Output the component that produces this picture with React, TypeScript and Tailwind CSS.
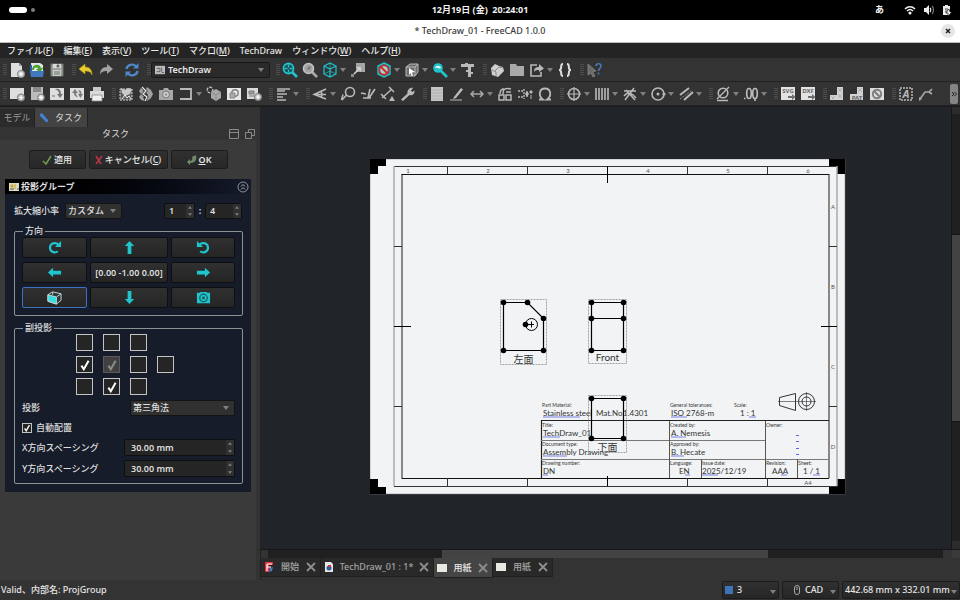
import { useState } from "react";
import type { ReactNode } from "react";
import clsx from "clsx";

const G = "#b9b9b9";
const W = "#dedede";
const T = "#1fc4cd";

// Toolbar drawings, all on a 16x16 grid
const icons: Record<string, ReactNode> = {
  newDoc: (
    <>
      <path d="M2 1h8l3 3v11H2z" fill={W} />
      <path d="M10 1v3h3z" fill="#999" />
      <circle cx="12" cy="12" r="3.6" fill="#c9c9c9" stroke="#8b8b8b" />
      <path d="M12 10v4M10 12h4" stroke="#fff" strokeWidth="1.2" />
    </>
  ),
  open: (
    <>
      <path d="M2 1h9l3 2v9H2z" fill="#e4e8ec" />
      <path d="M1 3h2v6H1z" fill="#2e5f9e" />
      <path d="M3 8c0-6 8-7 9-2l2.500-.5L11 10.500 7 7.500l2-.5C8 5 5 5 5 8z" fill="#4da32f" />
      <path d="M1 9h14l-1 6H2z" fill="#3f78bd" />
    </>
  ),
  save: (
    <>
      <path d="M2 2h12v12H2z" fill="#9aa29a" stroke="#777" />
      <path d="M4 2h8v4H4z" fill="#d8dcd8" />
      <path d="M4 8h8v6H4z" fill="#c6cbc6" />
      <path d="M8 3h2v2H8zM5 10h6M5 12h6" stroke="#6c736c" fill="#555" />
    </>
  ),
  undo: <path d="M1 7l6-5v3c5 0 7 3 7 8-1-3-3-4-7-4v3z" fill="#e8cb2e" stroke="#b59a14" strokeWidth=".6" />,
  redo: <path d="M15 7L9 2v3c-5 0-7 3-7 8 1-3 3-4 7-4v3z" fill="#a3a3a3" />,
  refresh: (
    <g fill="none" stroke="#4f86c8" strokeWidth="2.4">
      <path d="M2.500 7C3 3 9 1 12 4.500" />
      <path d="M13.500 9C13 13 7 15 4 11.500" />
      <path d="M14.500 1v5.500H9zM1.500 15V9.500H7z" fill="#4f86c8" stroke="none" />
    </g>
  ),
  fitAll: (
    <>
      <path d="M10 10l5 5" stroke={T} strokeWidth="2.6" />
      <circle cx="6.500" cy="6.500" r="5" fill="#174b50" stroke={T} strokeWidth="1.8" />
      <path d="M6.500 2.500v8M2.500 6.500h8" stroke={T} strokeWidth="1.4" />
      <path d="M5.500 5.500h2v2h-2z" fill="#333" />
    </>
  ),
  fitSel: (
    <>
      <path d="M10 10l5 5" stroke="#a8a8a8" strokeWidth="2.6" />
      <circle cx="6.500" cy="6.500" r="5" fill="#a2a2a2" stroke="#c2c2c2" strokeWidth="1.6" />
      <path d="M5 8l1-3 3-1-1 3z" fill="#777" />
    </>
  ),
  cube: (
    <g fill="none" stroke={T} strokeWidth="1.2">
      <path d="M8 1l6 3v8l-6 3-6-3V4zM2 4l6 3 6-3M8 7v8" />
      <path d="M8 1v6M2 12l6-3 6 3" strokeWidth=".7" />
    </g>
  ),
  link: (
    <>
      <path d="M6 1h9v9H6z" fill="#a5a5a5" />
      <path d="M6 5h5v5z" fill="#d0d0d0" />
      <path d="M9 7l-5 5" stroke="#d0d0d0" strokeWidth="1.6" />
      <path d="M1 12h3v3H1z" fill="#8c8c8c" />
    </>
  ),
  noClip: (
    <>
      <path d="M8 1l6 3v8l-6 3-6-3V4z" fill="#1b6a70" stroke={T} strokeWidth="1.4" />
      <circle cx="8" cy="8" r="4.600" fill="#a9cfd1" stroke="#d02a2a" strokeWidth="1.800" />
      <path d="M5 5l6 6" stroke="#d02a2a" strokeWidth="1.800" />
    </>
  ),
  cubeCursor: (
    <>
      <path d="M2 5l4-3h8v8l-3 4H2zM2 5h9v9M11 5l3-3" fill="#6d6d6d" stroke={G} />
      <path d="M5 6l6 4-3 .5 1 3-1.500.5-1-3L5 13z" fill="#fff" />
    </>
  ),
  zoomTeal: (
    <>
      <path d="M9 9l6 6" stroke={T} strokeWidth="2.600" />
      <circle cx="6" cy="6" r="4.800" fill={T} />
      <path d="M3 6c1-3 5-3 6 0l-2 .5c-1-1-2-1-4-.5z" fill="#f2fbfb" />
    </>
  ),
  caliper: <path d="M1 2h4V1h3v1h6v3h-3v5h2v2h-2v3H8v-5H6V8h2V5H1z" fill={G} />,
  part: (
    <>
      <path d="M2 6l4-4 4 2 4 1 1 4-6 6-6-2z" fill="#cfcfcf" />
      <path d="M6 9l4-4 4 1M3 8l4 2v4" stroke="#888" fill="none" />
    </>
  ),
  folder: <path d="M1 2h6l1 2h7v10H1z" fill="#a9a9a9" />,
  share: (
    <>
      <path d="M8 3H2v11h10v-4" fill="none" stroke={G} strokeWidth="1.600" />
      <path d="M5 10c0-4 2-5 5-5V2l5 4.500L10 10V8C8 8 6 8 5 10z" fill={G} />
    </>
  ),
  braces: (
    <path
      d="M6 2C3.500 2 4.500 4 4 6.500 3.800 7.500 3 8 2 8c1 0 1.800.5 2 1.500C4.500 12 3.500 14 6 14M10 2c2.500 0 1.500 2 2 4.500.2 1 1 1.500 2 1.500-1 0-1.800.5-2 1.500-.5 2.500.5 4.500-2 4.500"
      fill="none"
      stroke={W}
      strokeWidth="2"
    />
  ),
  whats: (
    <>
      <path d="M2 2l8 7-3.500.5L9 14l-2 1-2-4-3 2z" fill="#6a6a6a" stroke="#8c8c8c" strokeWidth=".7" />
      <path d="M10 4c0-3 5-3 5 0 0 2-2.500 2.500-2.500 5M12.500 10.500v2" fill="none" stroke="#4a78bd" strokeWidth="1.600" />
    </>
  ),
  page: (
    <>
      <path d="M1 2h14v11H1z" fill={W} />
      <circle cx="12" cy="11.500" r="3.600" fill="#bdbdbd" stroke="#7a7a7a" />
      <path d="M12 9.500v4M10 11.500h4" stroke="#fff" strokeWidth="1.200" />
    </>
  ),
  pageTpl: (
    <>
      <path d="M2 1h12v13H2z" fill="#bcbcbc" />
      <path d="M4 1h8v5H4z" fill="#8a8a8a" />
      <circle cx="12" cy="11.500" r="3.400" fill="#cfcfcf" stroke="#777" />
      <path d="M12 9.500v4M10 11.500h4" stroke="#fff" strokeWidth="1.200" />
    </>
  ),
  pageRedraw: (
    <>
      <path d="M1 2h14v12H1z" fill={W} />
      <path d="M6 3c5-1 6 2 6 5h2l-3 4-3-4h2c0-2-1-4-4-5z" fill="#777" />
      <path d="M3 9h3v2H3z" fill="#aaa" />
    </>
  ),
  pageAll: (
    <>
      <path d="M1 2h14v12H1z" fill={W} />
      <path d="M3 7l3-4 3 4H7c0 2 1 3 2 4-3 0-4-2-4-4zM14 8l-2.500 4L9 8h1.500c0-2 0-3-1.500-4 3 0 3.500 2 3.500 4z" fill="#7c7c7c" />
    </>
  ),
  printer: (
    <>
      <path d="M4 1h8v5H4z" fill="#c9c9c9" />
      <path d="M1 5h14v7H1z" fill="#dadada" />
      <path d="M3 9h10v6H3z" fill="#efefef" stroke="#8a8a8a" strokeWidth=".8" />
    </>
  ),
  view: (
    <>
      <path d="M2 3h12v11H2z" fill="#5c5c5c" stroke="#d5d5d5" strokeDasharray="2 1" />
      <path d="M3 2l4 2 3-2 4 1-2 5-5 2-3-3z" fill="#c9c9c9" />
      <path d="M4 13l3-4 2 3 2-2 2 3" stroke="#eee" fill="none" />
    </>
  ),
  broken: (
    <>
      <path d="M3 2h4L5 5l3 3-3 3 2 4-4-1-2-3 2-3-2-3z" fill="#a0a0a0" />
      <path d="M9 1l4 3 2 4-2 4-4 3-2-2 3-4-3-4z" fill="#a0a0a0" />
      <path d="M4 1l4 4-3 3 4 3-2 4" fill="none" stroke="#333" strokeWidth="2.600" />
      <path d="M4 1l4 4-3 3 4 3-2 4" fill="none" stroke="#e9e9e9" strokeWidth="1.200" />
    </>
  ),
  camera: (
    <>
      <path d="M1 4h4l1-2h4l1 2h4v10H1z" fill="#a8a8a8" />
      <circle cx="8" cy="8.500" r="3.400" fill="#d0d0d0" stroke="#777" />
      <circle cx="8" cy="8.500" r="1.300" fill="#999" />
    </>
  ),
  section: <path d="M2 3h11v10H2" fill="none" stroke={G} strokeWidth="1.800" />,
  detail: (
    <>
      <circle cx="4" cy="4" r="2.800" fill="none" stroke="#c4c4c4" strokeWidth="1.300" strokeDasharray="3 1" />
      <path d="M5 6l5-3 5 3v6l-5 3-5-3z" fill="#a8a8a8" />
      <path d="M5 6l5 3 5-3M10 9v6" stroke="#8c8c8c" fill="none" />
    </>
  ),
  clip: (
    <>
      <path d="M1 2h14v12H1z" fill="#e8e8e8" />
      <circle cx="9" cy="7" r="3.200" fill="none" stroke="#808080" strokeWidth="1.400" />
      <path d="M4 7h5v5H4z" fill="#aaa" stroke="#888" />
    </>
  ),
  clipAdd: (
    <>
      <path d="M1 2h11v11H1z" fill="#d9d9d9" />
      <path d="M3 5h5v3H3zM3 10h6" stroke="#7d7d7d" fill="#999" />
      <circle cx="12" cy="11" r="3.600" fill="#bdbdbd" stroke="#7a7a7a" />
      <path d="M12 9v4M10 11h4" stroke="#fff" strokeWidth="1.200" />
    </>
  ),
  stack: <path d="M2 3h13M2 5h8M2 8h10M2 11h6M2 14h9" stroke={G} strokeWidth="1.600" />,
  angle: <path d="M14 3L2 8.500 14 13M2 8.500h12M9 5c1 2 1 5 0 7" fill="none" stroke={G} strokeWidth="1.500" />,
  leader: (
    <>
      <circle cx="10" cy="6" r="4.500" fill="none" stroke={G} strokeWidth="1.600" />
      <path d="M6.500 9L2 14M3 8.500L1.500 14" stroke={G} strokeWidth="1.500" fill="none" />
    </>
  ),
  hatchDim: <path d="M1 7l5 1M3 12h5l2-9M9 12L15 3M8 12h3" fill="none" stroke={G} strokeWidth="1.700" />,
  dimTri: (
    <>
      <path d="M2 12L12 3M9 1l5 5M1 8l5 5" stroke={G} strokeWidth="1.500" fill="none" />
      <path d="M9 15l3-5 3 5z" fill={G} />
    </>
  ),
  wrench: (
    <path d="M1 13.500L7.500 7.500C7 4 10 1 13 2l-2 2.500L12 6l2.500-1.500C15 8 12 10 9.500 9L3 15z" fill={G} />
  ),
  hatch: (
    <>
      <path d="M2 1h12v14H2z" fill="#c6c6c6" />
      <path d="M2 4h12M2 7h12M2 10h12M2 13h12" stroke="#b0b0b0" />
    </>
  ),
  pen: (
    <>
      <path d="M5 11l7-9 2 1.500-7 8.500-3 1z" fill="#bdbdbd" />
      <path d="M1 14h12" stroke="#9a9a9a" strokeWidth="1.300" />
    </>
  ),
  extent: <path d="M2 8h12M5 5L2 8l3 3M11 5l3 3-3 3" fill="none" stroke="#a8a8a8" strokeWidth="1.500" />,
  weld: (
    <>
      <path d="M2 9h5v5H2zM9 9h5v5H9zM6 8c0-6 3-6 8-5M3 8c0-3 1-5 4-5" fill="none" stroke={G} strokeWidth="1.500" />
      <path d="M9 6h5" stroke={G} strokeWidth="1.500" />
    </>
  ),
  surface: (
    <>
      <path d="M1 5h5M1 11h5M7 3v10M9 6h2v4H9z" stroke={G} strokeWidth="1.400" fill={G} strokeDasharray="2 1" />
      <path d="M13 5h2v2h-2zM14 9v4" fill={G} stroke={G} />
    </>
  ),
  omega: <path d="M2 13.500h4C1 10 2 2.500 8 2.500s7 7.500 2 11h4" fill="none" stroke={G} strokeWidth="1.800" />,
  target: (
    <g fill="none" stroke={G} strokeWidth="1.600">
      <circle cx="8" cy="8" r="5.500" />
      <path d="M8 1v14M1 8h14" strokeWidth="1.200" />
    </g>
  ),
  bars: <path d="M2 2v12M5 2v12M8 2v12M11 2v12M14 2v12" stroke={G} strokeWidth="1.600" />,
  cross: <path d="M3 14L12 2M2 5h12M4 4l9 10M2 10c4-5 8-3 12 2" fill="none" stroke={G} strokeWidth="1.500" />,
  dotCircle: (
    <>
      <circle cx="8" cy="8" r="6" fill="none" stroke={G} strokeWidth="1.600" />
      <circle cx="8" cy="8" r="1.500" fill={G} />
      <circle cx="14" cy="8" r="1.600" fill={G} />
    </>
  ),
  parallel: (
    <>
      <path d="M2 9l9-7M6 14l9-8" stroke={G} strokeWidth="2" />
      <path d="M2 13l12-9" stroke="#888" strokeDasharray="2 1" />
    </>
  ),
  diameter: (
    <>
      <circle cx="8" cy="7" r="4.800" fill="none" stroke={G} strokeWidth="1.600" />
      <path d="M2 13L14 1M2 14.500h11" stroke={G} strokeWidth="1.400" />
    </>
  ),
  zeros: (
    <g fill="none" stroke={G} strokeWidth="1.700">
      <ellipse cx="6" cy="7.500" rx="2.300" ry="5" />
      <ellipse cx="12" cy="7.500" rx="2.300" ry="5" />
      <path d="M1 12.500h1.500M12 13v2" />
    </g>
  ),
  svg: (
    <>
      <path d="M1 1h14v13H1z" fill="#e2e2e2" />
      <path d="M8 10h4V8l3.500 3L12 14v-2H8z" fill="#6d6d6d" />
      <text x="8" y="7" fontSize="6" fontWeight="700" textAnchor="middle" fill="#666">SVG</text>
    </>
  ),
  dxf: (
    <>
      <path d="M1 1h14v13H1z" fill="#e2e2e2" />
      <path d="M8 10h4V8l3.500 3L12 14v-2H8z" fill="#6d6d6d" />
      <text x="8" y="7" fontSize="6" fontWeight="700" textAnchor="middle" fill="#666">DXF</text>
    </>
  ),
  fill: (
    <>
      <path d="M8 1h6v13H1V9h7z" fill="#d2d2d2" />
      <path d="M2 10l3 3M6 10l-3 3M9 2l4 4M13 2L9 6M9 8l4 4M13 8l-4 4" stroke="#b0b0b0" />
    </>
  ),
  fillPat: (
    <>
      <path d="M8 1h6v13H1V8h7z" fill="#d2d2d2" />
      <path d="M9 2l4 4M13 2L9 6" stroke="#b0b0b0" />
      <text x="8" y="14" fontSize="6" fontWeight="700" textAnchor="middle" fill="#666">PAT</text>
    </>
  ),
  off: (
    <>
      <path d="M1 2h14v12H1z" fill="#dcdcdc" />
      <circle cx="8" cy="8" r="4.200" fill="none" stroke="#7d7d7d" strokeWidth="1.900" />
      <path d="M5 5l6 6" stroke="#7d7d7d" strokeWidth="1.900" />
    </>
  ),
  richText: (
    <>
      <path d="M2 2h12v12H2z" fill="none" stroke={G} strokeWidth="1.500" strokeDasharray="2 1" />
      <text x="8" y="12" fontSize="11" fontWeight="700" fontStyle="italic" textAnchor="middle" fill={G}>A</text>
    </>
  ),
  annoLine: (
    <>
      <path d="M2 13l5-7h5M11 6l3-3M11 6l3 2" fill="none" stroke="#a8a8a8" strokeWidth="1.600" />
      <path d="M1 15v-4l3 2z" fill="#a8a8a8" />
    </>
  ),
};

// "name>" has a drop-down arrow, "-" is a separator
const viewTools = [
  ["newDoc", "open", "save"],
  ["undo", "redo", "-", "refresh"],
  ["#workbench"],
  ["fitAll", "fitSel", "cube>", "link", "-", "noClip>", "cubeCursor>", "zoomTeal>", "caliper"],
  ["part", "folder", "share>", "braces"],
  ["whats"],
];

const drawTools = [
  ["page", "pageTpl", "pageRedraw", "pageAll", "printer"],
  ["view", "broken", "camera", "section>", "detail", "clip", "clipAdd"],
  ["stack>"],
  ["angle>", "leader", "hatchDim", "dimTri", "wrench"],
  ["hatch", "pen", "extent>", "weld", "surface", "omega"],
  ["target>", "bars>", "cross>", "dotCircle>", "parallel>"],
  ["diameter>", "zeros>"],
  ["svg", "dxf"],
  ["fill", "fillPat", "off"],
  ["richText", "annoLine"],
];

const Caret = ({ className = "" }: { className?: string }) => (
  <svg viewBox="0 0 6 4" className={clsx("h-1 w-1.5 shrink-0", className)} aria-hidden="true">
    <path d="M0 0h6L3 4z" fill="#808080" />
  </svg>
);

const Grip = () => (
  <svg viewBox="0 0 4 11" className="h-[11px] w-1 shrink-0" aria-hidden="true">
    <path d="M1 0v11M3 0v11" stroke="#686868" strokeDasharray="1 1" />
  </svg>
);

const WorkbenchSelect = () => (
  <span className="relative mr-px flex h-4 items-center">
    <select
      aria-label="Workbench"
      className="h-4 w-[119px] appearance-none rounded-xs border border-[#191919] bg-[#2a2a2a] pl-4 text-[9px] leading-3.5 font-semibold text-[#e6e6e6]"
    >
      <option>TechDraw</option>
    </select>
    <svg viewBox="0 0 12 10" className="pointer-events-none absolute left-1 h-2.5 w-2.5" aria-hidden="true">
      <path d="M0 0h12v10H0z" fill="#bcbcbc" />
      <path d="M2 3h4v4H2M8 2v5M8 8h3" stroke="#555" fill="none" />
    </svg>
    <Caret className="pointer-events-none absolute right-1.5" />
  </span>
);

const ToolButton = ({ id }: { id: string }) => {
  const hasMenu = id.endsWith(">");
  const name = hasMenu ? id.slice(0, -1) : id;
  return (
    <button type="button" aria-label={name} className="flex items-center px-0.5">
      <svg viewBox="0 0 16 16" className="size-4" aria-hidden="true">
        {icons[name]}
      </svg>
      {hasMenu && <Caret className="ml-0.5" />}
    </button>
  );
};

const Toolbar = ({ groups, children }: { groups: string[][]; children?: ReactNode }) => (
  <div className="flex h-6 items-center border-b border-[#222] bg-[#333]">
    {groups.map((group, gi) => (
      <div key={gi} className="flex items-center pl-[5px] first:pl-[3px]">
        <Grip />
        {group.map((id) => {
          if (id === "-") return <span key={id} className="w-1.5" />;
          if (id === "#workbench") return <WorkbenchSelect key={id} />;
          return <ToolButton key={id} id={id} />;
        })}
      </div>
    ))}
    {children}
  </div>
);

const menus = [
  ["ファイル", "F"],
  ["編集", "E"],
  ["表示", "V"],
  ["ツール", "T"],
  ["マクロ", "M"],
  ["TechDraw", ""],
  ["ウィンドウ", "W"],
  ["ヘルプ", "H"],
];

const MenuBar = () => (
  <nav className="flex h-[15px] items-center gap-2.5 bg-[#242424] pl-[7px] text-[9px] leading-3 font-medium text-[#e6e6e6]">
    {menus.map(([label, key]) => (
      <button key={label} type="button" className="whitespace-nowrap">
        {label}
        {key && (
          <>
            (<u className="underline-offset-1">{key}</u>)
          </>
        )}
      </button>
    ))}
  </nav>
);

const TopBar = () => (
  <header className="relative flex h-5 items-center justify-center bg-black text-[9px] font-bold text-[#f2f2f2]">
    <div className="absolute left-[9px] flex items-center gap-1">
      <span className="h-1.5 w-[18px] rounded-full bg-white" />
      <span className="size-1 rounded-full bg-[#7c7c7c]" />
    </div>
    <span className="whitespace-pre">12月19日 (金)  20:24:01</span>
    <div className="absolute right-2 flex items-center">
      <span className="mr-5">あ</span>
      <svg viewBox="0 0 12 10" className="mr-[7px] h-2.5 w-3" aria-hidden="true">
        <g fill="none" stroke="#eee" strokeWidth="1.600">
          <path d="M1 4c3-3 7-3 10 0M3 6c2-2 4-2 6 0" />
          <circle cx="6" cy="8" r=".8" fill="#eee" />
        </g>
      </svg>
      <svg viewBox="0 0 12 10" className="mr-[7px] h-2.5 w-3" aria-hidden="true">
        <path d="M1 3h2l3-3v10L3 7H1z" fill="#eee" />
        <path d="M7 3c1 1 1 3 0 4" fill="none" stroke="#eee" strokeWidth="1.200" />
        <path d="M9 1c2 2 2 6 0 8" fill="none" stroke="#777" strokeWidth="1.200" />
      </svg>
      <svg viewBox="0 0 10 11" className="h-[11px] w-2.5" aria-hidden="true">
        <path d="M3 0h3v1h2v9H1V1h2z" fill="#eee" />
        <path d="M3 3h3v5H3z" fill="#999" />
        <path d="M7 4L4 8h2v3l4-4H8z" fill="#eee" stroke="#000" strokeWidth=".6" />
      </svg>
    </div>
  </header>
);

const TitleBar = () => (
  <div className="relative flex h-[23px] items-center justify-center border-b border-[#bbb] bg-white text-[9px] font-medium text-[#3a3a3a]">
    * TechDraw_01 - FreeCAD 1.0.0
    <button type="button" aria-label="Close" className="absolute right-[5px] flex size-3.5 items-center justify-center rounded-full bg-[#e6e6e6]">
      <svg viewBox="0 0 6 6" className="size-1.5" aria-hidden="true">
        <path d="M1 1l4 4M5 1L1 5" stroke="#222" strokeWidth="1.500" />
      </svg>
    </button>
  </div>
);

const dirButton = "flex h-[21px] items-center justify-center rounded-xs border border-[#0e0f11] bg-linear-to-b from-[#303030] to-[#252525]";

const arrows: Record<string, ReactNode> = {
  cw: (
    <>
      <path d="M11.500 12A5 5 0 1 1 12 5" fill="none" stroke={T} strokeWidth="2.400" />
      <path d="M15 1v6.500H8.500z" fill={T} />
    </>
  ),
  ccw: (
    <>
      <path d="M4.500 12A5 5 0 1 0 4 5" fill="none" stroke={T} strokeWidth="2.400" />
      <path d="M1 1v6.500h6.500z" fill={T} />
    </>
  ),
  up: <path d="M8 1l5 5.500h-3V15H6V6.500H3z" fill={T} />,
  down: <path d="M8 15l5-5.500h-3V1H6v8.500H3z" fill={T} />,
  left: <path d="M1 8l5.500-5v3H15v4H6.500v3z" fill={T} />,
  right: <path d="M15 8L9.500 3v3H1v4h8.500v3z" fill={T} />,
  box: (
    <>
      <path d="M1 5l5-3 9 2v7l-5 4-9-3z" fill="#2c3b3d" stroke="#c9d6d6" />
      <path d="M1 5l9 2.500v7.500L1 12z" fill="#35dde2" stroke="#c9d6d6" />
      <path d="M10 7.500L15 4M6 2v3" stroke="#c9d6d6" />
    </>
  ),
  shot: (
    <>
      <path d="M1 3h3l1-1h6l1 1h3v11H1z" fill={T} />
      <circle cx="8" cy="8.500" r="4" fill={T} stroke="#17595d" strokeWidth="1.300" />
      <circle cx="8" cy="8.500" r="1.500" fill="#17595d" />
    </>
  ),
};

const DirButton = ({ name }: { name: string }) => (
  <button type="button" aria-label={name} className={clsx(dirButton, name === "box" && "border-[#3c74c0]!")}>
    <svg viewBox="0 0 16 16" className="size-[15px]" aria-hidden="true">
      {arrows[name]}
    </svg>
  </button>
);

const Spin = ({ label, value, className }: { label: string; value: string; className: string }) => (
  <span className={clsx("flex rounded-xs border border-[#0e0f11] bg-[#252525] font-semibold", className)}>
    <input id={label} aria-label={label} defaultValue={value} className="min-w-0 flex-1 outline-none" />
    <span className="flex w-2 flex-col justify-around bg-[#303030]">
      <button type="button" aria-label="+" className="flex justify-center">
        <Caret className="h-[3px]! w-1! rotate-180" />
      </button>
      <button type="button" aria-label="-" className="flex justify-center">
        <Caret className="h-[3px]! w-1!" />
      </button>
    </span>
  </span>
);

const Combo = ({ id, value, className }: { id: string; value: string; className: string }) => (
  <span className={clsx("relative flex items-center", className)}>
    <select id={id} className="h-4 w-full appearance-none rounded-xs border border-[#141414] bg-[#303030] pl-0.5 leading-3.5">
      <option>{value}</option>
    </select>
    <Caret className="pointer-events-none absolute right-1.5" />
  </span>
);

const Tick = ({ className }: { className: string }) => (
  <svg viewBox="0 0 10 10" className={clsx("pointer-events-none absolute", className)} aria-hidden="true">
    <path d="M2 5.500L4 8.500 8 1.500" fill="none" stroke="currentColor" strokeWidth="1.700" />
  </svg>
);

const projections = [
  [0, 0, 0, null],
  [1, 2, 0, 0],
  [0, 1, 0, null],
];

const ProjectionGrid = () => {
  const [cells, setCells] = useState(projections);
  const toggle = (r: number, c: number) =>
    setCells(cells.map((row, i) => row.map((v, j) => (i === r && j === c ? (v ? 0 : 1) : v))));

  return (
    <div className="-mt-px ml-[54px] grid w-max grid-cols-4 gap-x-2.5 gap-y-[5px]">
      {cells.map((row, r) =>
        row.map((v, c) =>
          v === null ? (
            <span key={`${r}${c}`} />
          ) : (
            <span key={`${r}${c}`} className="relative flex size-[17px] items-center justify-center">
              <input
                type="checkbox"
                aria-label={`${r}-${c}`}
                checked={v > 0}
                disabled={v === 2}
                onChange={() => toggle(r, c)}
                className="size-[17px] appearance-none border border-[#c4c4c4] bg-[#252525] disabled:border-[#5a5a5a] disabled:bg-[#404040]"
              />
              {v > 0 && <Tick className={v === 2 ? "size-3 text-[#8c8c8c]" : "size-3 text-white"} />}
            </span>
          )
        )
      )}
    </div>
  );
};

const panelButton =
  "flex h-[19px] items-center justify-center gap-0.5 rounded-xs border border-[#1c1c1c] bg-linear-to-b from-[#303030] to-[#272727]";

const TaskPanel = () => (
  <aside className="flex w-[260px] shrink-0 flex-col bg-[#333]">
    <div className="flex h-5 items-end text-[9px]">
      <button type="button" className="h-[18px] w-[34px] bg-[#2b2b2b] text-[#9c9c9c]">
        モデル
      </button>
      <button type="button" className="flex h-[19px] w-[54px] items-center gap-1.5 border-x border-[#222] bg-[#434343] pl-1 text-[#dcdcdc]">
        <svg viewBox="0 0 10 10" className="size-2.5" aria-hidden="true">
          <path d="M1 1l2-1 6 7v2L7 9 1 3z" fill="#4380cf" />
        </svg>
        タスク
      </button>
    </div>
    <div className="flex h-[13px] items-center justify-center gap-1.5 text-[9px] leading-3 text-[#dcdcdc]">
      <span className="flex-1 pl-2 text-center">タスク</span>
      <svg viewBox="0 0 10 10" className="size-2.5" fill="none" stroke="#8a8a8a" aria-hidden="true">
        <path d="M.5.5h9v9h-9zM0 3.500h10" />
      </svg>
      <svg viewBox="0 0 10 10" className="mr-[5px] size-2.5" fill="none" stroke="#8a8a8a" aria-hidden="true">
        <path d="M.5 3.500h6v6h-6zM3.500 3V.5h6v6H7" />
      </svg>
    </div>

    <div className="mr-1 flex flex-1 flex-col bg-[#3a3a3a] px-[5px] pt-2.5">
      <div className="flex justify-center gap-[3px] text-[9px] font-medium text-[#e6e6e6]">
        <button type="button" className={clsx(panelButton, "w-[57px]")}>
          <svg viewBox="0 0 10 10" className="size-2.5" aria-hidden="true">
            <path d="M1 6l3 3 5-8" fill="none" stroke="#6f9a4d" strokeWidth="1.600" />
          </svg>
          適用
        </button>
        <button type="button" className={clsx(panelButton, "w-[79px] whitespace-nowrap")}>
          <svg viewBox="0 0 8 10" className="h-2.5 w-2" aria-hidden="true">
            <path d="M1 1l5 8M7 1L1 9" stroke="#b93445" strokeWidth="1.600" />
          </svg>
          <span>
            キャンセル(<u>C</u>)
          </span>
        </button>
        <button type="button" className={clsx(panelButton, "w-[57px] font-semibold")}>
          <svg viewBox="0 0 10 10" className="size-2.5" aria-hidden="true">
            <path d="M0 7l3-3v2c2 0 3-2 2-4l4-2c1 5-1 8-6 8v2z" fill="#718a66" />
          </svg>
          <span>
            <u>O</u>K
          </span>
        </button>
      </div>

      <section className="mt-2.5 bg-[#161c29] pb-2 text-[9px] leading-3.5 font-medium text-[#dedede]">
        <h2 className="flex h-[15px] items-center gap-0.5 bg-linear-to-r from-black to-[#161b2b] pl-1 pr-0.5 font-bold">
          <svg viewBox="0 0 10 8" className="h-2 w-2.5" aria-hidden="true">
            <path d="M0 0h10v8H0z" fill="#dcdcc0" />
            <path d="M2 2h2v2H2zM6 1v5" fill="#c9a92a" stroke="#c9a92a" />
            <path d="M1 6h4M8 6h2" stroke="#555" />
          </svg>
          投影グループ
          <svg viewBox="0 0 12 12" className="ml-auto size-3" fill="none" stroke="#b0b0b0" aria-hidden="true">
            <circle cx="6" cy="6" r="5" strokeWidth=".8" />
            <path d="M4 5.500l2-2 2 2M4 8.500l2-2 2 2" />
          </svg>
        </h2>

        <div className="pl-[9px] pr-2">
          <div className="mt-[9px] flex items-center">
            <label htmlFor="scale" className="w-[51px] whitespace-nowrap">
              拡大縮小率
            </label>
            <Combo id="scale" value="カスタム" className="w-[57px]" />
            <Spin label="分子" value="1" className="ml-auto h-4 w-[31px] pl-1" />
            <span className="w-2.5 text-center font-bold">:</span>
            <Spin label="分母" value="4" className="mr-px h-4 w-[37px] pl-1" />
          </div>

          <fieldset className="mt-[5px] rounded-xs border border-[#8b9494] px-[7px] pb-[7px]">
            <legend className="ml-px px-0.5 leading-[14px]">方向</legend>
            <div className="-mt-px grid grid-cols-[65fr_78fr_64fr] gap-x-[3px] gap-y-1">
              <DirButton name="cw" />
              <DirButton name="up" />
              <DirButton name="ccw" />
              <DirButton name="left" />
              <button type="button" className={clsx(dirButton, "font-semibold whitespace-nowrap")}>
                [0.00 -1.00 0.00]
              </button>
              <DirButton name="right" />
              <DirButton name="box" />
              <DirButton name="down" />
              <DirButton name="shot" />
            </div>
          </fieldset>

          <fieldset className="mt-[5px] rounded-xs border border-[#8b9494] px-[7px] pb-1.5">
            <legend className="ml-px px-0.5 leading-[14px]">副投影</legend>
            <ProjectionGrid />
            <div className="mt-[5px] flex items-center justify-between">
              <label htmlFor="kind">投影</label>
              <Combo id="kind" value="第三角法" className="w-[105px]" />
            </div>
            <label className="mt-1 flex h-4 items-center gap-1">
              <span className="relative flex size-2.5 items-center justify-center">
                <input type="checkbox" defaultChecked className="size-2.5 appearance-none border border-[#c4c4c4] bg-[#252525]" />
                <Tick className="size-2 text-white" />
              </span>
              自動配置
            </label>
            <div className="mt-[3px] flex items-center justify-between">
              <label htmlFor="X">X方向スペーシング</label>
              <Spin label="X" value="30.00 mm" className="h-[17px] w-[111px] pl-1.5" />
            </div>
            <div className="mt-1 flex items-center justify-between">
              <label htmlFor="Y">Y方向スペーシング</label>
              <Spin label="Y" value="30.00 mm" className="h-[17px] w-[111px] pl-1.5" />
            </div>
          </fieldset>
        </div>
      </section>
    </div>
  </aside>
);

const View = ({ x, y, w, h, children }: { x: number; y: number; w: number; h: number; children: ReactNode }) => (
  <g>
    <rect x={x} y={y} width={w} height={h} fill="none" stroke="#8a8a8a" strokeWidth=".8" strokeDasharray="2 1" />
    {children}
  </g>
);

const Dots = ({ points }: { points: number[][] }) => (
  <>
    {points.map(([x, y]) => (
      <circle key={`${x}-${y}`} cx={x} cy={y} r="2.800" fill="#000" />
    ))}
  </>
);

// label, x, baseline
const captions: [string, number, number][] = [
  ["Part Material:", 542, 407],
  ["General tolerances:", 670, 407],
  ["Scale:", 734, 407],
  ["Title:", 542, 427],
  ["Created by:", 670, 427],
  ["Owner:", 766, 427],
  ["Document type:", 542, 446],
  ["Approved by:", 670, 446],
  ["Drawing number:", 542, 465],
  ["Language:", 670, 465],
  ["Issue date:", 702, 465],
  ["Revision:", 766, 465],
  ["Sheet:", 798, 465],
];

// value, x, baseline, underline start, underline end
const fields: [string, number, number, number, number][] = [
  ["Stainless steel", 543, 416, 543, 580],
  ["Mat.No.", 596, 416, 0, 0],
  ["1.4301", 623, 416, 0, 0],
  ["ISO 2768-m", 671, 416, 671, 687],
  ["1 : 1", 740, 416, 749, 756],
  ["TechDraw_01", 543, 436, 543, 560],
  ["A. Nemesis", 671, 436, 671, 686],
  ["Assembly Drawing", 543, 455, 543, 567],
  ["B. Hecate", 671, 455, 671, 684],
  ["DN", 543, 474, 543, 548],
  ["EN", 679, 474, 685, 690],
  ["2025/12/19", 702, 474, 702, 718],
  ["AAA", 772, 474, 781, 787],
  ["1 / 1", 803, 474, 813, 820],
];

const Sheet = () => (
  <svg
    viewBox="370 159 476 336"
    className="w-[476px] shrink-0 font-['Lato','Noto_Sans_CJK_JP',sans-serif]"
    role="img"
    aria-label="A4"
  >
    <rect x="370" y="159" width="475" height="335" fill="#f1f3f5" stroke="#777" strokeWidth=".5" />
    <path d="M370 159h16v7h-8v8h-8zM829 159h16v15h-8v-8h-8zM370 494h16v-7h-8v-8h-8zM829 494h16v-15h-8v8h-8z" />
    <g fill="none" stroke="#333">
      <path d="M394 166.500h443.500M394 486.500h443.500" />
      <path d="M394 166v320M837 166v320" stroke="#aaa" strokeWidth="1.500" />
      <path d="M402 174v304M829 174v304" stroke="#666" strokeWidth="1.500" />
      <path d="M401.500 174.500H829M401.500 478.500H829" stroke="#111" />
      <path d="M447.500 166v8M527.500 166v8M687.500 166v8M767.500 166v8M447.500 478v8M527.500 478v8M687.500 478v8M767.500 478v8" />
      <path d="M394 246.500h8M394 406.500h8M829 246.500h8M829 406.500h8" />
      <path d="M607.500 166v17M607.500 476v10M394 326.500h17M821 326.500h16" stroke="#000" />
    </g>
    <g fontSize="6" fill="#555" textAnchor="middle">
      {["1", "2", "3", "4", "5", "6"].map((n, i) => (
        <text key={n} x={408 + i * 80} y="173">
          {n}
        </text>
      ))}
      {["A", "B", "C", "D"].map((n, i) => (
        <text key={n} x="833" y={209 + i * 80}>
          {n}
        </text>
      ))}
      <text x="808" y="485">A4</text>
    </g>

    {/* title block */}
    <g fill="none" stroke="#333">
      <path d="M541.500 478v-57.500H829" stroke="#222" strokeWidth="1.200" />
      <path d="M541 440.500h224M541 459.500h288" stroke="#777" strokeWidth="1.200" />
      <path d="M669.500 421v57M765.500 421v57M701.500 459v19M797.500 459v19" stroke="#555" />
    </g>
    <g fontSize="5" fill="#333">
      {captions.map(([label, x, y]) => (
        <text key={label} x={x} y={y}>
          {label}
        </text>
      ))}
    </g>
    <g fontSize="8" fill="#333">
      {fields.map(([label, x, y, from, to]) => (
        <g key={label + x}>
          <text x={x} y={y}>
            {label}
          </text>
          {to > 0 && <path d={`M${from} ${y + 1}H${to}`} stroke="#5b67e0" strokeWidth=".8" />}
        </g>
      ))}
    </g>
    <path d="M796 435.500h3M796 441.500h3M796 448.500h3M796 454.500h3" stroke="#5b67e0" />
    <g fill="none" stroke="#333">
      <path d="M779.500 397.500L795.500 393.500v17L779.500 405.500z" />
      <circle cx="806.500" cy="401.500" r="8" />
      <circle cx="806.500" cy="401.500" r="4.500" />
      <path d="M778 401.500h38M806.500 392v19" strokeWidth=".6" />
    </g>

    <View x={500.5} y={299.5} w={46} h={65}>
      <path d="M503.500 302.500h24l16 16v32h-40z" fill="none" stroke="#000" strokeWidth="1.200" />
      <circle cx="531.500" cy="324.500" r="6" fill="none" stroke="#000" />
      <path d="M525 324.500h9M531.500 321.500v6" stroke="#000" />
      <Dots points={[[503.5, 302.5], [527.5, 302.5], [543.5, 318.5], [543.5, 350.5], [503.5, 350.5], [525.5, 324.5]]} />
      <text x="523.500" y="363" fontSize="10" textAnchor="middle" fill="#333">左面</text>
    </View>
    <View x={588.5} y={299.5} w={38} h={64}>
      <path d="M591.500 302.500h32v48h-32zM591.500 318.500h32" fill="none" stroke="#000" strokeWidth="1.200" />
      <Dots points={[[591.5, 302.5], [623.5, 302.5], [591.5, 318.5], [623.5, 318.5], [591.5, 350.5], [623.5, 350.5]]} />
      <text x="607.500" y="361" fontSize="10" textAnchor="middle" fill="#333">Front</text>
    </View>
    <View x={588.5} y={395.5} w={38} h={57}>
      <path d="M591.500 398.500h32v40h-32z" fill="none" stroke="#000" strokeWidth="1.200" />
      <Dots points={[[591.5, 398.5], [623.5, 398.5], [591.5, 438.5], [623.5, 438.5]]} />
      <text x="607.500" y="451" fontSize="10" textAnchor="middle" fill="#333">下面</text>
    </View>
  </svg>
);

const docTabs = [
  { label: "開始", kind: "app", width: "w-[60px]" },
  { label: "TechDraw_01 : 1*", kind: "doc", width: "w-[113px]" },
  { label: "用紙", kind: "sheet", width: "w-[59px]", active: true },
  { label: "用紙", kind: "sheet", width: "w-[60px]" },
];

const DocTabs = () => (
  <div className="flex h-[22px] items-start bg-[#333] text-[9px] leading-3 font-medium">
    {docTabs.map((tab, i) => (
      <div
        key={i}
        className={clsx(
          "flex items-center justify-between border-r border-b border-[#202020] pl-[3px] pr-1",
          tab.width,
          tab.active ? "h-5 bg-[#454545] text-[#e8e8e8]" : "h-[19px] bg-[#292929] text-[#a5a5a5]"
        )}
      >
        <svg viewBox="0 0 10 10" className="size-2.5 shrink-0" aria-hidden="true">
          {tab.kind === "app" && (
            <>
              <path d="M1 0h8v3H5v2h2v2H5v3H1z" fill="#e5303b" />
              <path d="M3 2h5M3 5h4M3 2v7" stroke="#fff" strokeWidth="1.200" />
              <path d="M6 6l3-1-1 4-3 1z" fill="#3e7cc4" />
            </>
          )}
          {tab.kind === "doc" && (
            <>
              <path d="M1 0h6l2 2v8H1z" fill="#e6e6e6" />
              <circle cx="5" cy="6" r="2.500" fill="#2b5c9e" />
              <path d="M4 3h3v2H4z" fill="#d0303a" />
            </>
          )}
          {tab.kind === "sheet" && <path d="M0 1h10v8H0z" fill="#e9e9e3" />}
        </svg>
        <button type="button" className="whitespace-nowrap">{tab.label}</button>
        <button type="button" aria-label="Close tab">
          <svg viewBox="0 0 10 10" className="size-2.5" aria-hidden="true">
            <path d="M1 1l8 8M9 1L1 9" stroke="#8d8d8d" strokeWidth="1.800" />
          </svg>
        </button>
      </div>
    ))}
  </div>
);

const statusButton = "flex h-[18px] items-center rounded-xs border border-[#1c1c1c] bg-linear-to-b from-[#303030] to-[#262626] px-0.5";

const StatusBar = () => (
  <footer className="flex h-5 items-center gap-[3px] bg-[#333] pl-px text-[9px] font-medium text-[#e6e6e6]">
    <span className="mr-auto">Valid、内部名: ProjGroup</span>
    <button type="button" className={clsx(statusButton, "w-[57px] gap-1")}>
      <span className="size-2 bg-[#3f73b8]" />3
      <Caret className="mt-1 ml-auto" />
    </button>
    <button type="button" className={clsx(statusButton, "w-[57px] gap-1 pl-2.5")}>
      <svg viewBox="0 0 8 10" className="h-2.5 w-2" fill="none" stroke="#aaa" aria-hidden="true">
        <rect x="1.500" y=".5" width="5" height="9" rx="2.500" />
        <path d="M4 2v3" />
      </svg>
      CAD
      <Caret className="mt-1 ml-auto" />
    </button>
    <button type="button" className={clsx(statusButton, "w-[118px] whitespace-nowrap")}>
      442.68 mm x 332.01 mm
      <Caret className="mt-1 ml-auto" />
    </button>
  </footer>
);

const Viewport = () => (
  <main className="flex min-w-0 flex-1 flex-col border-l border-[#222]">
    <div className="flex flex-1">
      <div className="flex flex-1 items-center justify-center overflow-hidden bg-[#21252a] pb-[3px] pl-[3px]">
        <Sheet />
      </div>
      <div className="flex w-[9px] flex-col border-l border-[#161616] bg-[#202020]">
        <span className="h-[7px] bg-[#2c2c2c]" />
        <span className="flex-[121]" />
        <span className="flex-[186] border-y border-[#161616] bg-[#434343]" />
        <span className="flex-[120]" />
        <span className="h-2 bg-[#2c2c2c]" />
      </div>
    </div>
    <div className="flex h-[9px] border-t border-[#161616] bg-[#202020]">
      <span className="w-[7px] bg-[#333]" />
      <span className="flex-[174]" />
      <span className="flex-[325] bg-[#434343]" />
      <span className="flex-[175]" />
      <span className="w-[9px] bg-[#333]" />
      <span className="w-2 bg-[#3a3a3a]" />
    </div>
    <DocTabs />
  </main>
);

export default function App() {
  return (
    <div className="flex min-h-screen flex-col overflow-hidden bg-[#333] font-['Noto_Sans','Noto_Sans_CJK_JP',sans-serif]">
      <TopBar />
      <TitleBar />
      <MenuBar />
      <Toolbar groups={viewTools} />
      <Toolbar groups={drawTools}>
        <button type="button" aria-label="More" className="ml-auto mr-0.5 flex h-5 w-2 items-center justify-center rounded-xs bg-[#858585]">
          <svg viewBox="0 0 6 6" className="size-1.5" fill="none" stroke="#222" aria-hidden="true">
            <path d="M1 1l2 2-2 2M3.500 1l2 2-2 2" />
          </svg>
        </button>
      </Toolbar>
      <div className="flex flex-1 border-t border-[#1a1a1a]">
        <TaskPanel />
        <Viewport />
      </div>
      <StatusBar />
    </div>
  );
}
